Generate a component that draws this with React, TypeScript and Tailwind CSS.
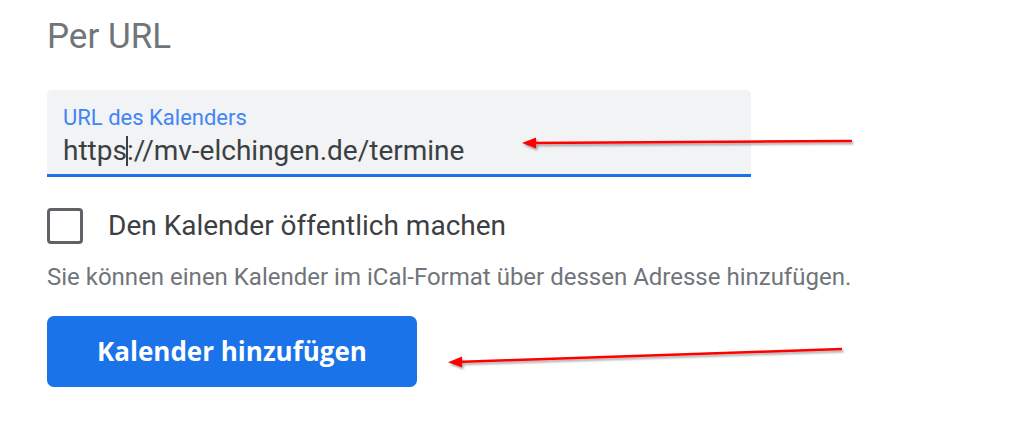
export default function App() {
  return (
    <div className="relative w-[1036px] h-[438px] bg-white overflow-hidden font-['Roboto',sans-serif]">
      <div className="pl-[47px] pt-[15px]">
        {/* Titel */}
        <h2 className="text-[35px] leading-[44px] text-[#70757a] font-normal">Per URL</h2>

        {/* URL-Feld */}
        <div className="mt-[31px] w-[704px] h-[87px] bg-[#f1f3f4] rounded-t-[5px] border-b-[3px] border-[#1a73e8] px-[16px] pt-[15px]">
          <div className="text-[22px] leading-[26px] text-[#4285f4]">URL des Kalenders</div>
          <div className="mt-[2px] text-[28px] leading-[36px] text-[#3c4043] flex items-center">
            <span>https</span>
            <span className="w-[2px] h-[30px] bg-[#3c4043] -mx-[1px]" />
            <span>://mv-elchingen.de/termine</span>
          </div>
        </div>

        {/* Checkbox */}
        <label className="mt-[31px] flex items-center gap-[25px]">
          <span className="w-[36px] h-[36px] rounded-[4px] border-[3px] border-[#5f6368]" />
          <span className="text-[28px] leading-[36px] text-[#3c4043]">Den Kalender öffentlich machen</span>
        </label>

        <p className="mt-[18px] text-[24px] leading-[30px] text-[#70757a]">
          Sie können einen Kalender im iCal-Format über dessen Adresse hinzufügen.
        </p>

        <button
          type="button"
          className="mt-[24px] w-[370px] h-[71px] rounded-[7px] bg-[#1a73e8] text-white text-[26px] font-bold font-['Open_Sans',sans-serif]"
        >
          Kalender hinzufügen
        </button>
      </div>

      {/* Pfeile */}
      <svg className="absolute inset-0 pointer-events-none" width="1036" height="438">
        <defs>
          <filter id="sh" x="-10%" y="-200%" width="120%" height="500%">
            <feDropShadow dx="1.5" dy="2" stdDeviation="1.2" floodColor="#000" floodOpacity="0.35" />
          </filter>
        </defs>
        <g filter="url(#sh)" fill="#ff0000" stroke="#ff0000">
          <line x1="852" y1="141" x2="530" y2="143" strokeWidth="2.5" />
          <path d="M522 143 L536 137.5 L536 148.5 Z" stroke="none" />
          <line x1="842" y1="349" x2="456" y2="362" strokeWidth="2.5" />
          <path d="M448 362.3 L462 356.5 L462 367.5 Z" stroke="none" />
        </g>
      </svg>
    </div>
  );
}
